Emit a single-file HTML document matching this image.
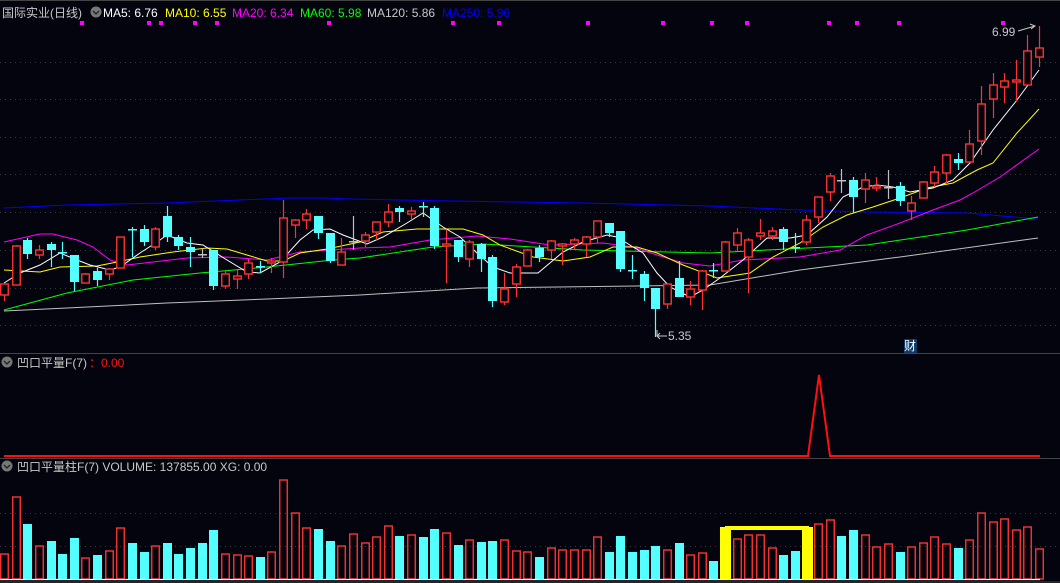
<!DOCTYPE html>
<html><head><meta charset="utf-8"><style>
html,body{margin:0;padding:0;background:#04040e;width:1060px;height:583px;overflow:hidden}
svg{display:block}
text{font-family:"Liberation Sans","Noto Sans CJK SC",sans-serif;font-size:12px}
</style></head><body>
<svg id="s" width="1060" height="583" xmlns="http://www.w3.org/2000/svg">
<rect width="1060" height="583" fill="#04040e"/>
<line x1="0" y1="0.5" x2="1060" y2="0.5" stroke="#444"/>
<g id="grid" stroke="#3a3a3a" stroke-dasharray="1,4"></g>
<line x1="0" y1="353.5" x2="1060" y2="353.5" stroke="#444"/>
<line x1="0" y1="458.5" x2="1060" y2="458.5" stroke="#444"/>
<g id="ma" fill="none" stroke-width="1"></g>
<g id="cd"></g>
<g id="vol"></g>
<line x1="0" y1="579.5" x2="1040" y2="579.5" stroke="#fff" stroke-width="1.2"/>
<line x1="0" y1="582" x2="1060" y2="582" stroke="#444"/>
<polyline points="4,456 808,456 819,375 830,456 1040,456" fill="none" stroke="#ff1010" stroke-width="2"/>
<rect x="720" y="527" width="11" height="52" fill="#ffff00"/>
<rect x="802" y="527" width="11" height="52" fill="#ffff00"/>
<rect x="725" y="526" width="84" height="4" fill="#ffff00"/>
<g id="dots" fill="#ff00ff"></g>
<circle cx="96" cy="12" r="5.5" fill="#777"/><path d="M93,11 l3,3 l3,-3" stroke="#222" fill="none" stroke-width="1.3"/>
<circle cx="7" cy="362" r="5.5" fill="#777"/><path d="M4,361 l3,3 l3,-3" stroke="#222" fill="none" stroke-width="1.3"/>
<circle cx="7" cy="466" r="5.5" fill="#777"/><path d="M4,465 l3,3 l3,-3" stroke="#222" fill="none" stroke-width="1.3"/>
<text x="2" y="17" fill="#c8c8c8">国际实业(日线)</text>
<text x="103" y="17" fill="#ffffff">MA5: 6.76</text>
<text x="165" y="17" fill="#ffff00">MA10: 6.55</text>
<text x="232" y="17" fill="#ff00ff">MA20: 6.34</text>
<text x="300" y="17" fill="#00ff00">MA60: 5.98</text>
<text x="367" y="17" fill="#c8c8c8">MA120: 5.86</text>
<text x="442" y="17" fill="#0000ff">MA250: 5.96</text>
<text x="17" y="367" fill="#c8c8c8">凹口平量F(7)</text>
<text x="89" y="367" fill="#ff1010">：0.00</text>
<text x="17" y="471" fill="#c8c8c8">凹口平量柱F(7)  VOLUME: 137855.00  XG: 0.00</text>
<text x="992" y="36" fill="#c8c8c8">6.99</text>
<path d="M1018,31 L1035,26 M1030,24 L1035,26 L1031,29" stroke="#c8c8c8" fill="none"/>
<path d="M657,330 L657,336 L667,336 M660,333 L657,336 L660,339" stroke="#c8c8c8" fill="none"/>
<text x="668" y="340" fill="#c8c8c8">5.35</text>
<rect x="904" y="339" width="13" height="14" fill="#0a3a6a"/>
<text x="904" y="350" fill="#fff" font-size="12">财</text>
</svg>
<script>
var S='http://www.w3.org/2000/svg';
function el(p,t,a){var e=document.createElementNS(S,t);for(var k in a)e.setAttribute(k,a[k]);document.getElementById(p).appendChild(e);return e;}
[62,99,137,174,212,250,288,325,513,546].forEach(function(y){el('grid','line',{x1:0,y1:y+.5,x2:1060,y2:y+.5});});
[82,149,161,195,217,329,453,499,588,663,712,747,829,857,899,1003].forEach(function(x){el('dots','rect',{x:x-2,y:21,width:4,height:4});});
var ma=[
['#0000ff','4,208 67,205 167,203 290,198 325,198 350,199 450,201 583,203 710,206 800,210 867,212 967,213 1038,219'],
['#c0c0c0','4,311 67,308 167,303 267,299 360,295 477,288 710,285 800,270 900,257 1038,238'],
['#00ff00','4,310 67,293 133,280 200,273 267,267 333,260 360,258 433,247 483,244 583,250 710,253 767,250 867,245 967,230 1038,217'],
['#ff00ff','4,242 40,234 53,234 77,240 93,247 110,260 127,265 153,262 187,258 227,257 267,260 300,252 360,248 390,247 430,240 477,236 510,239 550,245 603,243 633,247 657,255 683,263 710,266 743,260 800,257 840,250 867,235 900,223 933,210 960,200 973,193 1000,177 1039,149'],
['#ffff00','4,270 40,272 60,267 97,266 117,262 140,257 173,252 207,248 227,249 247,255 267,261 283,261 300,253 327,249 360,242 383,232 417,229 463,229 483,235 500,245 533,257 563,261 590,257 613,247 637,247 657,253 683,265 717,278 750,273 773,257 800,243 823,227 847,215 873,207 900,198 927,188 953,183 977,170 993,163 1017,133 1039,109'],
['#ffffff','4,283 20,273 40,265 60,253 77,260 90,265 110,270 120,267 140,253 160,240 167,235 187,243 203,245 227,260 247,272 260,273 280,262 300,240 313,230 330,229 343,235 367,244 383,237 407,223 423,213 443,227 460,237 477,253 493,267 510,273 538,273 563,252 583,242 607,235 617,237 633,247 643,253 657,273 670,287 690,297 703,290 720,278 743,260 767,238 790,238 807,235 827,217 843,197 863,187 877,185 893,187 910,192 933,188 953,180 970,163 993,130 1017,100 1039,70']];
ma.forEach(function(m){el('ma','polyline',{points:m[1],stroke:m[0]});});
var C=[
[284,295,284,301,'r'],[246,285,245,285,'r'],[240,254,238,259,'c'],[250,255,245,259,'r'],[244,250,242,267,'c'],[252,253,242,259,'c'],[255,282,255,291,'c'],[274,283,273,283,'r'],[271,280,268,286,'c'],[269,274,268,280,'r'],
[237,268,237,268,'r'],[229,230,227,257,'c'],[229,242,225,246,'c'],[229,247,227,250,'r'],[216,237,206,242,'c'],[237,246,235,250,'c'],[247,252,237,267,'c'],[254,255,248,258,'g'],[250,286,250,290,'c'],[274,286,270,289,'r'],
[276,279,270,289,'r'],[263,274,259,279,'r'],[266,267,261,273,'c'],[261,263,258,273,'r'],[218,262,200,278,'r'],[220,225,219,238,'r'],[214,220,209,229,'r'],[216,233,216,239,'c'],[233,261,233,263,'c'],[252,265,238,265,'r'],
[241,242,216,250,'g'],[235,241,232,247,'r'],[222,232,222,240,'r'],[212,222,204,227,'r'],[208,212,206,222,'c'],[211,214,207,220,'r'],[206,207,202,217,'c'],[208,246,206,249,'c'],[244,246,230,283,'r'],[240,257,240,262,'c'],
[242,259,240,267,'r'],[244,259,243,272,'c'],[257,301,255,307,'c'],[289,302,273,305,'r'],[267,284,264,297,'r'],[250,266,249,266,'r'],[248,257,245,262,'c'],[241,250,240,259,'r'],[244,246,243,265,'r'],[240,244,238,250,'r'],
[237,244,236,257,'r'],[221,237,221,243,'r'],[223,233,223,237,'c'],[231,269,231,272,'c'],[270,271,255,279,'c'],[274,288,271,301,'c'],[288,309,288,337,'c'],[284,304,283,309,'r'],[278,297,261,297,'c'],[289,297,281,305,'r'],
[271,290,270,310,'r'],[270,271,263,278,'c'],[242,271,241,271,'r'],[233,245,228,251,'r'],[240,257,238,293,'r'],[233,236,219,240,'r'],[231,236,227,240,'r'],[229,242,227,250,'c'],[247,248,233,253,'c'],[220,242,215,245,'r'],
[197,217,197,223,'r'],[176,192,173,201,'r'],[180,181,169,193,'g'],[180,197,177,213,'c'],[180,189,173,203,'r'],[186,188,177,191,'r'],[187,188,170,199,'g'],[186,201,182,206,'c'],[203,211,196,220,'r'],[182,198,181,198,'r'],
[172,183,166,187,'r'],[155,173,154,183,'r'],[159,163,153,170,'c'],[144,162,130,162,'r'],[104,141,86,155,'r'],[85,99,73,118,'r'],[81,87,73,103,'r'],[80,82,60,102,'r'],[51,85,35,85,'r'],[48,57,26,67,'r']];
var col={r:'#ff3232',c:'#54ffff',g:'#c0c0c0',y:'#ffff00'};
C.forEach(function(d,i){var x=Math.round(i*11.63),cx=x+4.5,c=col[d[4]];
el('cd','line',{x1:cx,y1:d[2],x2:cx,y2:d[3],stroke:c,'stroke-width':1.2});
var h=Math.max(d[1]-d[0],1.5);
if(d[4]=='r')el('cd','rect',{x:x+.75,y:d[0],width:7.5,height:h,fill:'#04040e',stroke:c,'stroke-width':1.4});
else el('cd','rect',{x:x,y:d[0],width:9,height:h,fill:c});});
var V=[554,497,524,546,541,554,538,558,555,551,528,543,552,546,543,554,548,543,530,554,555,556,557,552,480,513,528,529,541,546,534,543,537,526,536,535,537,529,533,545,540,542,541,540,551,552,557,548,550,550,550,537,552,536,552,550,546,550,543,555,553,561,527,539,535,535,548,555,551,527,524,520,536,530,535,547,544,552,547,543,537,544,548,540,513,522,519,530,527,549];
var VC='rrcrcccrcrrccrcccccrrrcrrrrccrrrrrcrccrcrccrrrcrrrrrccccc'+'rcrrcyrrrrccyrrccrrrcrrrrcrrrrrrr';
V.forEach(function(t,i){var x=Math.round(i*11.63),k=VC[i]||'r';if(k=='y')return;var c=col[k];
if(k=='r')el('vol','rect',{x:x+.75,y:t,width:7.5,height:579-t,fill:'none',stroke:c,'stroke-width':1.4});
else el('vol','rect',{x:x,y:t,width:9,height:579-t,fill:c});});
</script>
</body></html>
